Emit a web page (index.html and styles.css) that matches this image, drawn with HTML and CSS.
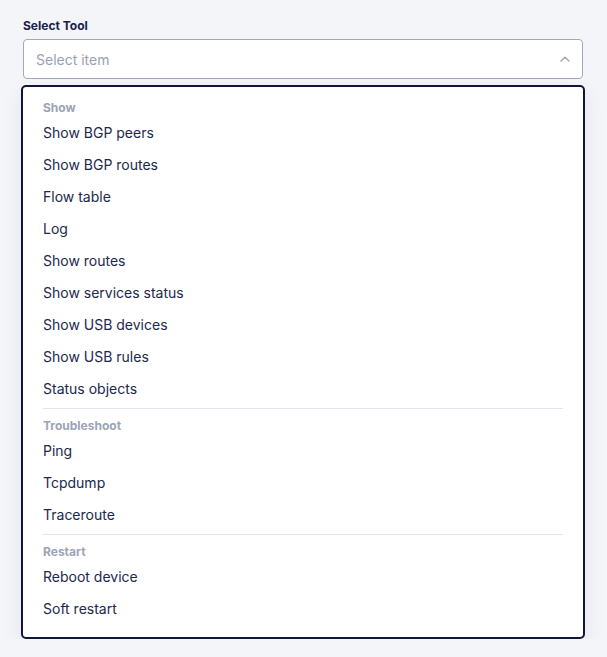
FILE: index.html
```html
<!DOCTYPE html>
<html>
<head>
<meta charset="utf-8">
<link rel="stylesheet" href="styles.css">
</head>
<body>
<div class="field">
  <div class="label">Select Tool</div>
  <div class="select">
    <span class="placeholder">Select item</span>
    <svg class="chevron" width="10" height="6" viewBox="0 0 10 6"><path d="M1 5 L5 1.2 L9 5" fill="none" stroke="#9ea7b8" stroke-width="1.4" stroke-linecap="round" stroke-linejoin="round"/></svg>
  </div>
  <div class="menu">
    <div class="group-title">Show</div>
    <div class="item">Show BGP peers</div>
    <div class="item">Show BGP routes</div>
    <div class="item">Flow table</div>
    <div class="item">Log</div>
    <div class="item">Show routes</div>
    <div class="item">Show services status</div>
    <div class="item">Show USB devices</div>
    <div class="item">Show USB rules</div>
    <div class="item">Status objects</div>
    <div class="divider"></div>
    <div class="group-title">Troubleshoot</div>
    <div class="item">Ping</div>
    <div class="item">Tcpdump</div>
    <div class="item">Traceroute</div>
    <div class="divider"></div>
    <div class="group-title">Restart</div>
    <div class="item">Reboot device</div>
    <div class="item">Soft restart</div>
  </div>
</div>
</body>
</html>
```
FILE: styles.css
```css
html, body {
  margin: 0;
  padding: 0;
  background: #f4f5f8;
  font-family: Inter, "Noto Sans", sans-serif;
}
.field {
  width: 560px;
  padding: 18px 0 0 23px;
}
.label {
  font-size: 12px;
  line-height: 16px;
  font-weight: 700;
  color: #17234a;
  margin-bottom: 5px;
}
.select {
  box-sizing: border-box;
  height: 40px;
  background: #fff;
  border: 1px solid #a0a9ba;
  border-radius: 4px;
  display: flex;
  align-items: center;
  justify-content: space-between;
  padding: 0 12px 0 12px;
}
.placeholder {
  font-size: 14px;
  color: #98a1b2;
}
.chevron {
  display: block;
  margin-top: -1px;
}
.menu {
  box-sizing: border-box;
  width: 564px;
  margin: 6px 0 0 -2px;
  background: #fff;
  border: 2px solid #0e1836;
  border-radius: 5px;
  padding: 8px 0 12px;
  box-shadow: 0 8px 22px rgba(20, 30, 60, 0.07);
}
.group-title {
  font-size: 12px;
  line-height: 16px;
  font-weight: 700;
  color: #9ca4b4;
  padding: 5px 20px 1px;
}
.item {
  font-size: 14px;
  line-height: 20px;
  padding: 6px 20px;
  color: #1b284b;
}
.divider {
  height: 1px;
  background: #e2e5eb;
  margin: 3px 20px 4px;
}
```
